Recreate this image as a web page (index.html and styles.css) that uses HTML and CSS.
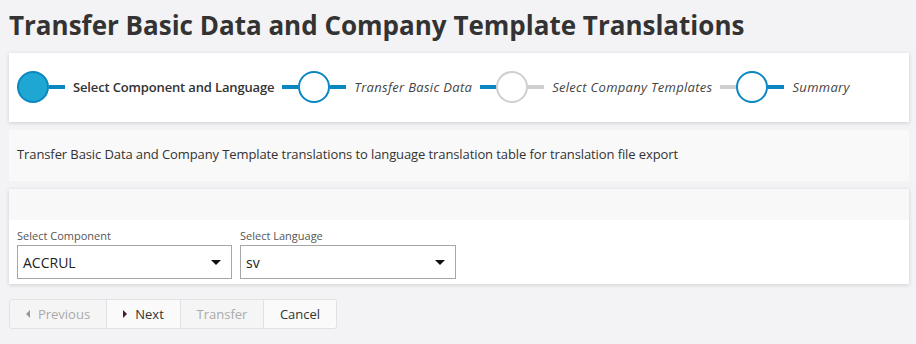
FILE: index.html
```html
<!DOCTYPE html>
<html lang="en">
<head>
    <meta charset="UTF-8">
    <title>Transfer Basic Data and Company Template Translations</title>
    <link rel="stylesheet" href="styles.css">
</head>
<body>

<h1 class="page-title">Transfer Basic Data and Company Template Translations</h1>

<div class="card stepper">
    <div class="step">
        <span class="dot filled"></span>
        <span class="bar blue"></span>
        <span class="step-label current">Select Component and Language</span>
    </div>
    <div class="step">
        <span class="bar blue"></span>
        <span class="dot"></span>
        <span class="bar blue"></span>
        <span class="step-label">Transfer Basic Data</span>
    </div>
    <div class="step">
        <span class="bar blue"></span>
        <span class="dot gray"></span>
        <span class="bar gray"></span>
        <span class="step-label">Select Company Templates</span>
    </div>
    <div class="step">
        <span class="bar gray"></span>
        <span class="dot"></span>
        <span class="bar blue"></span>
        <span class="step-label">Summary</span>
    </div>
</div>

<div class="info">
    Transfer Basic Data and Company Template translations to language translation table for translation file export
</div>

<div class="card form-card">
    <div class="form-head"></div>
    <div class="form-body">
        <div class="field">
            <label>Select Component</label>
            <div class="select">
                <span>ACCRUL</span>
                <span class="caret"></span>
            </div>
        </div>
        <div class="field">
            <label>Select Language</label>
            <div class="select">
                <span>sv</span>
                <span class="caret"></span>
            </div>
        </div>
    </div>
</div>

<div class="btn-group">
    <button class="btn disabled"><span class="tri left"></span>Previous</button>
    <button class="btn"><span class="tri right"></span>Next</button>
    <button class="btn disabled">Transfer</button>
    <button class="btn">Cancel</button>
</div>

</body>
</html>
```

FILE: styles.css
```css
* {
    box-sizing: border-box;
}

body {
    margin: 0;
    padding: 0 7px 0 9px;
    background-color: #f3f2f5;
    font-family: "Open Sans", "Liberation Sans", sans-serif;
    color: #333;
}

.page-title {
    margin: 0;
    padding-top: 7px;
    height: 53px;
    font-size: 26px;
    font-weight: 700;
    line-height: 36px;
    color: #333;
}

.card {
    background-color: #fff;
    box-shadow: 0 1px 4px rgba(0, 0, 0, 0.15);
}

/* stepper */
.stepper {
    display: flex;
    align-items: center;
    height: 69px;
    padding-left: 8px;
    padding-bottom: 2px;
}

.step {
    display: flex;
    align-items: center;
}

.dot {
    width: 32px;
    height: 32px;
    border-radius: 50%;
    border: 2px solid #0a87c1;
    background: #fff;
}
.dot.filled {
    background: #1fa7d3;
}
.dot.gray {
    border-color: #cfcfcf;
}

.bar {
    width: 16px;
    height: 4px;
}
.bar.blue { background: #0a87c1; }
.bar.gray { background: #cfcfcf; }

.step-label {
    font-size: 13px;
    font-style: italic;
    letter-spacing: 0.3px;
    color: #444;
    margin: 0 8px;
}
.step-label.current {
    font-style: normal;
    font-weight: 600;
    letter-spacing: -0.15px;
    color: #333;
}

/* info panel */
.info {
    margin-top: 8px;
    height: 51px;
    display: flex;
    align-items: center;
    padding: 0 0 4px 8px;
    background: #f9f9fa;
    font-size: 13px;
    letter-spacing: -0.1px;
    color: #333;
}

/* form */
.form-card {
    margin-top: 8px;
}
.form-head {
    height: 31px;
    background: #f8f8f9;
}
.form-body {
    display: flex;
    gap: 8px;
    padding: 7px 8px 5px;
}
.field label {
    display: block;
    font-size: 11px;
    color: #555;
    line-height: 17px;
    margin-bottom: 1px;
}
.select {
    width: 215px;
    height: 34px;
    border: 1px solid #a6a6a6;
    display: flex;
    align-items: center;
    justify-content: space-between;
    padding: 0 10px 0 5px;
    font-size: 14px;
    color: #222;
}
.field + .field .select {
    width: 216px;
}
.caret {
    width: 0;
    height: 0;
    border-left: 5px solid transparent;
    border-right: 5px solid transparent;
    border-top: 5px solid #111;
}

/* buttons */
.btn-group {
    display: inline-flex;
    margin-top: 15px;
    border: 1px solid #e1e1e3;
    border-radius: 3px;
    overflow: hidden;
}
.btn {
    font-family: inherit;
    font-size: 13px;
    height: 28px;
    padding: 0;
    border: none;
    border-left: 1px solid #e1e1e3;
    background: #fafafa;
    color: #333;
    display: flex;
    align-items: center;
    justify-content: center;
}
.btn:first-child { border-left: none; }
.btn.disabled {
    background: #f5f5f6;
    color: #aaa;
}
.btn:nth-child(1) { width: 96px; }
.btn:nth-child(2) { width: 74px; }
.btn:nth-child(3) { width: 83px; }
.btn:nth-child(4) { width: 73px; }

.tri {
    width: 0;
    height: 0;
    border-top: 4px solid transparent;
    border-bottom: 4px solid transparent;
    margin-right: 8px;
}
.tri.left { border-right: 4px solid #999; }
.tri.right { border-left: 4px solid #4a1a2a; }
```
